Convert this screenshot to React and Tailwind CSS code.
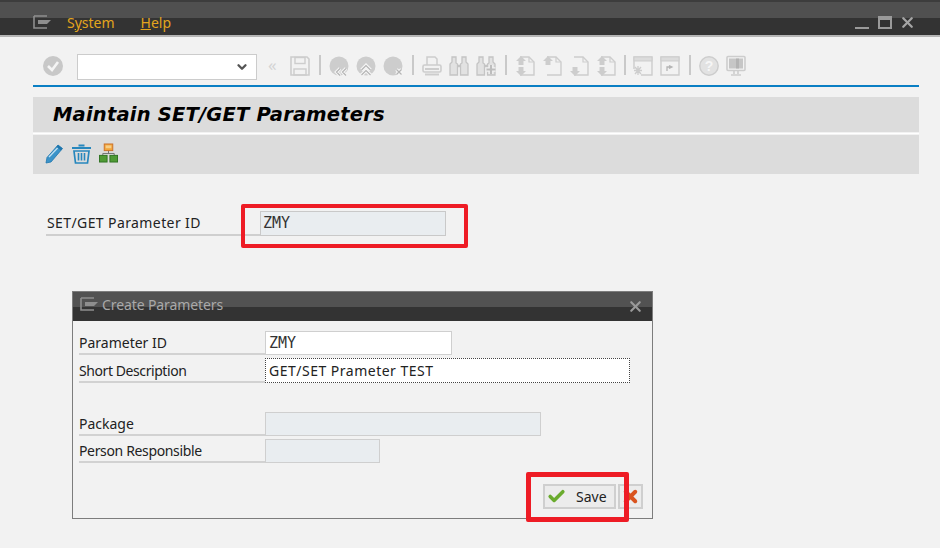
import { ChevronDown, Check, X } from "lucide-react";

const ui = "font-['Noto_Sans','Open_Sans',sans-serif]";
const mono = "font-['DejaVu_Sans_Mono','Liberation_Mono',monospace]";

const G = "#cdcdcd";

function Ico({ children, w = 20 }) {
  return (
    <svg width={w} height="22" viewBox="0 0 20 22" fill="none" className="shrink-0">
      {children}
    </svg>
  );
}

function Sep({ w = "w-[5px]" }) {
  return (
    <div className={`${w} flex justify-center`}>
      <div className="w-[2px] h-[20px] shrink-0 bg-[#c9c9c9]" />
    </div>
  );
}

function MenuFlag({ color = "#8e8e8e" }) {
  return (
    <svg width="19" height="14" viewBox="0 0 19 14" fill="none">
      <path d="M1 1H14M1 1V13H14M1 1V13" stroke={color} strokeWidth="1.6" />
      <path d="M5 5H18L14 9H5Z" fill={color} />
    </svg>
  );
}

function SaveIco() {
  return (
    <Ico>
      <path d="M1 2H17L19 4V20H1Z" stroke={G} strokeWidth="1.6" />
      <rect x="5" y="2.5" width="10" height="6" stroke={G} strokeWidth="1.4" />
      <rect x="4" y="14" width="12" height="6" stroke={G} strokeWidth="1.4" />
    </Ico>
  );
}

function RoundIco({ mark }) {
  const d = {
    left: "M11 13.5L7.5 17L11 20.5M17 13.5L13.5 17L17 20.5",
    up: "M5.5 15L10 10.5L14.5 15M5.5 20L10 15.5L14.5 20",
    x: "M13.5 14.5L18.5 19.5M18.5 14.5L13.5 19.5",
  }[mark];
  return (
    <Ico>
      <circle cx="10" cy="11" r="9.5" fill={G} />
      <path d={d} stroke="#f6f6f6" strokeWidth="3.4" />
      <path d={d} stroke="#b4b4b4" strokeWidth="1.2" />
    </Ico>
  );
}

function PrintIco() {
  return (
    <Ico>
      <path d="M5 10V2H13L15 4V10" stroke={G} strokeWidth="1.5" />
      <rect x="1" y="10" width="18" height="7" rx="1.5" stroke={G} strokeWidth="1.6" />
      <rect x="3" y="13" width="14" height="2" fill={G} />
      <rect x="3" y="18.5" width="14" height="2" fill={G} />
    </Ico>
  );
}

function BinocIco({ plus }) {
  return (
    <Ico>
      <path d="M3 2H7V8L8.5 9V20H1V9L3 7Z" fill="#e2e2e2" stroke="#c4c4c4" strokeWidth="1.3" />
      <path d="M13 2H17V7L19 9V20H11.5V9L13 8Z" fill="#e2e2e2" stroke="#c4c4c4" strokeWidth="1.3" />
      <path d="M8.5 11H11.5" stroke="#c4c4c4" strokeWidth="2.5" />
      {plus && <path d="M15 10V19M10.5 14.5H19.5" stroke="#f2f2f2" strokeWidth="4.4" />}
      {plus && <path d="M15 10V19M10.5 14.5H19.5" stroke="#bdbdbd" strokeWidth="2.2" />}
    </Ico>
  );
}

function PageIco({ up, down }) {
  return (
    <Ico>
      <path d="M5 2H14L19 7V20H5" stroke={G} strokeWidth="1.4" />
      <path d="M14 2V7H19" stroke={G} strokeWidth="1.2" />
      {up && <path d="M6 1L1 6H3.5V10H8.5V6H11Z" fill={G} />}
      {down && <path d="M6 21L1 16H3.5V12H8.5V16H11Z" fill={G} />}
    </Ico>
  );
}

function WinIco({ kind }) {
  return (
    <Ico>
      <path d="M1 14V2H19V20H8" stroke={G} strokeWidth="1.4" />
      <rect x="1" y="2" width="18" height="4" fill="#dcdcdc" stroke={G} strokeWidth="1" />
      {kind === "new" ? (
        <path d="M5 11V20M1 15.5H9M2 12L8 19M8 12L2 19" stroke={G} strokeWidth="1.3" />
      ) : (
        <>
          <path d="M1 14V20H8" stroke={G} strokeWidth="1.4" />
          <path d="M7 16V12H11M9 10.5L12 12L9 13.5" stroke="#b5b5b5" strokeWidth="1.3" />
        </>
      )}
    </Ico>
  );
}

function HelpIco() {
  return (
    <Ico>
      <circle cx="10" cy="11" r="9.2" fill="#e2e2e2" stroke={G} strokeWidth="1.4" />
      <text x="10" y="16" textAnchor="middle" fontSize="14" fontWeight="700" fill="#f6f6f6" fontFamily="Liberation Sans">?</text>
    </Ico>
  );
}

function ScreenIco() {
  return (
    <Ico>
      <rect x="1" y="1.5" width="18" height="14" rx="1" stroke={G} strokeWidth="1.6" />
      <rect x="3" y="3.5" width="14" height="10" fill="#c6c6c6" />
      <rect x="10" y="3.5" width="3" height="10" fill="#b3b3b3" />
      <path d="M8 16V19M12 16V19M5 20H15" stroke={G} strokeWidth="1.6" />
    </Ico>
  );
}

function PenIco() {
  return (
    <svg width="19" height="21" viewBox="0 0 19 21" fill="none">
      <path d="M13 2L17.5 5.5L6 19L1 20L2 14.5Z" fill="#3b93c9" stroke="#1f76ad" strokeWidth="0.8" />
      <path d="M4 14L14 3.5" stroke="#bfe0f2" strokeWidth="1.3" />
      <path d="M13 2L17.5 5.5L16 7.5L11.5 4Z" fill="#1f76ad" />
    </svg>
  );
}

function TrashIco() {
  return (
    <svg width="21" height="21" viewBox="0 0 21 21" fill="none">
      <path d="M7.5 2.5H13.5M1 5H20" stroke="#2787bd" strokeWidth="2" />
      <path d="M3 8H18L16.5 20H4.5Z" stroke="#2787bd" strokeWidth="1.7" />
      <path d="M7.5 10V17.5M10.5 10V17.5M13.5 10V17.5" stroke="#2787bd" strokeWidth="1.6" />
    </svg>
  );
}

function TreeIco() {
  return (
    <svg width="19" height="20" viewBox="0 0 20 20" fill="none">
      <path d="M10 7V10.5M4 13V10.5H16V13" stroke="#6f6f6f" strokeWidth="1" />
      <rect x="5.5" y="0.5" width="9" height="7" fill="#f2a53a" stroke="#c9712a" />
      <rect x="7" y="2" width="6" height="3" fill="#f7cf88" />
      <rect x="0.5" y="12.5" width="8" height="7" fill="#4f9a35" stroke="#2f7322" />
      <rect x="11.5" y="12.5" width="8" height="7" fill="#4f9a35" stroke="#2f7322" />
    </svg>
  );
}

function Field({ children, w, tone = "white" }) {
  const bg = tone === "white" ? "bg-white" : "bg-[#e9edf0]";
  return (
    <div className={`h-[24px] ${w} ${bg} border border-[#cfcfcf] flex items-center pl-[3px] text-[14px] text-[#333]`}>
      {children}
    </div>
  );
}

function DialogRow({ label, children, gap = "mb-[3px]", track = "" }) {
  return (
    <div className={`flex items-end ${gap}`}>
      <div className={`w-[187px] ml-[5px] -mr-[1px] h-[24px] pt-[1px] flex items-center border-b-2 border-[#d2d2d2] text-[14px] text-[#222] leading-none ${track}`}>
        {label}
      </div>
      {children}
    </div>
  );
}

function CreateDialog() {
  return (
    <div className="absolute left-[72px] top-[291px] w-[581px] h-[228px] border border-[#7d7d7d] bg-[#f2f2f2] flex flex-col">
      <div className="h-[29px] relative bg-[linear-gradient(#525252_0,#525252_15px,#333_15px)] flex items-center pl-[7px] gap-[3px] pb-[5px]">
        <MenuFlag />
        <span className="text-[14px] text-[#a9a9a9] tracking-[-0.1px]">Create Parameters</span>
        <X size={17} strokeWidth={3} className="absolute right-[8px] top-[6px] text-[#9a9a9a]" />
      </div>
      <div className="pl-[1px] pt-[10px] flex-1 flex flex-col">
        <DialogRow label="Parameter ID">
          <Field w="w-[187px]"><span className={`${mono} text-[15px]`}>ZMY</span></Field>
        </DialogRow>
        <DialogRow label="Short Description" gap="mb-[29px]" track="tracking-[-0.42px]">
          <div className="h-[25px] w-[365px] bg-white border border-dotted border-[#444] flex items-center pl-[3px] text-[14px] text-[#222] tracking-[0.5px]">
            GET/SET Prameter TEST
          </div>
        </DialogRow>
        <DialogRow label="Package">
          <Field w="w-[276px]" tone="grey" />
        </DialogRow>
        <DialogRow label="Person Responsible" track="tracking-[-0.35px]">
          <Field w="w-[115px]" tone="grey" />
        </DialogRow>
        <div className="flex justify-end gap-[2px] pr-[9px] mt-[18px]">
          <div className="w-[73px] h-[25px] bg-[#ececec] border-2 border-[#cfcfcf] flex items-center pl-[2px] text-[14px] text-[#222]">
            <Check size={19} strokeWidth={4.5} className="text-[#6aab2e]" />
            <span className="ml-[10px]">Save</span>
          </div>
          <div className="w-[25px] h-[25px] bg-[#ececec] border-2 border-[#cfcfcf] flex items-center justify-center">
            <X size={19} strokeWidth={5} className="text-[#d9531e]" />
          </div>
        </div>
      </div>
    </div>
  );
}

export default function App() {
  return (
    <div className={`relative w-[940px] h-[548px] overflow-hidden bg-[#f2f2f2] ${ui}`}>
      {/* title bar */}
      <div className="h-[37px] bg-[linear-gradient(#3d3d3d_0,#3d3d3d_2px,#505050_2px,#505050_18px,#333_18px,#333_35px,#b5b5b5_35px)] flex items-center pl-[33px] pr-[24px] pt-[7px]">
        <MenuFlag />
        <span className="ml-[15px] text-[14px] text-[#e3a51d]">S<span className="underline">y</span>stem</span>
        <span className="ml-[26px] text-[14px] text-[#e3a51d]"><span className="underline">H</span>elp</span>
        <div className="ml-auto flex items-center gap-[9px]">
          <div className="w-[14px] h-[2px] bg-[#9a9a9a] mt-[11px]" />
          <div className="w-[14px] h-[13px] border-2 border-t-4 border-[#9a9a9a]" />
          <X size={17} strokeWidth={3.2} className="text-[#a5a5a5] -ml-[2px]" />
        </div>
      </div>

      <div className="px-[33px] pr-[21px]">
        {/* toolbar */}
        <div className="h-[50px] pt-[18px] border-b-2 border-[#0a7fc4] flex items-start gap-[7px]">
          <svg width="20" height="22" viewBox="0 0 20 22" className="ml-[10px] mr-[7px] shrink-0">
            <circle cx="10" cy="11" r="10" fill="#c8c8c8" />
            <path d="M5 11L9 15L15 7" stroke="#f5f5f5" strokeWidth="2.6" fill="none" />
          </svg>
          <div className="w-[180px] h-[26px] -mt-[1px] bg-white border border-[#cccccc] flex items-center justify-end pr-[7px]">
            <ChevronDown size={14} strokeWidth={4} className="text-[#555]" />
          </div>
          <span className="w-[15px] ml-[4px] text-[17px] leading-[20px] text-[#d4d4d4]">«</span>
          <SaveIco />
          <Sep />
          <RoundIco mark="left" />
          <RoundIco mark="up" />
          <RoundIco mark="x" />
          <Sep />
          <PrintIco />
          <BinocIco />
          <BinocIco plus />
          <Sep />
          <PageIco up down />
          <PageIco up />
          <PageIco down />
          <PageIco up down />
          <Sep w="w-[3px]" />
          <WinIco kind="new" />
          <WinIco kind="link" />
          <Sep />
          <HelpIco />
          <ScreenIco />
        </div>

        {/* screen title */}
        <div className="mt-[10px] h-[35px] bg-[#dcdcdc] flex items-center pl-[20px]">
          <h1 className="font-['DejaVu_Sans',sans-serif] text-[19.5px] font-bold italic text-black leading-none tracking-[0.2px]">Maintain SET/GET Parameters</h1>
        </div>
        <div className="my-[1px] h-[1px] bg-white" />
        <div className="h-[39px] bg-[#dcdcdc] flex items-center gap-[7px] pl-[12px] pb-[3px]">
          <PenIco />
          <TrashIco />
          <TreeIco />
        </div>

        {/* selection field */}
        <div className="mt-[36px] ml-[13px] flex items-end">
          <div className="w-[214px] h-[26px] pl-[1px] flex items-center border-b-2 border-[#cfcfcf] text-[14px] text-[#222] tracking-[0.4px]">
            SET/GET Parameter ID
          </div>
          <div className={`w-[186px] h-[25px] bg-[#e9edf0] border border-[#c9c9c9] flex items-center pl-[2px] text-[15px] text-[#333] ${mono}`}>
            ZMY
          </div>
        </div>
      </div>

      <CreateDialog />

      {/* red annotations */}
      <div className="absolute left-[241px] top-[204px] w-[227px] h-[44px] border-[4px] border-[#ee1c25] rounded-[2px]" />
      <div className="absolute left-[526px] top-[472px] w-[103px] h-[50px] border-[5px] border-[#ee1c25] rounded-[2px]" />
    </div>
  );
}
